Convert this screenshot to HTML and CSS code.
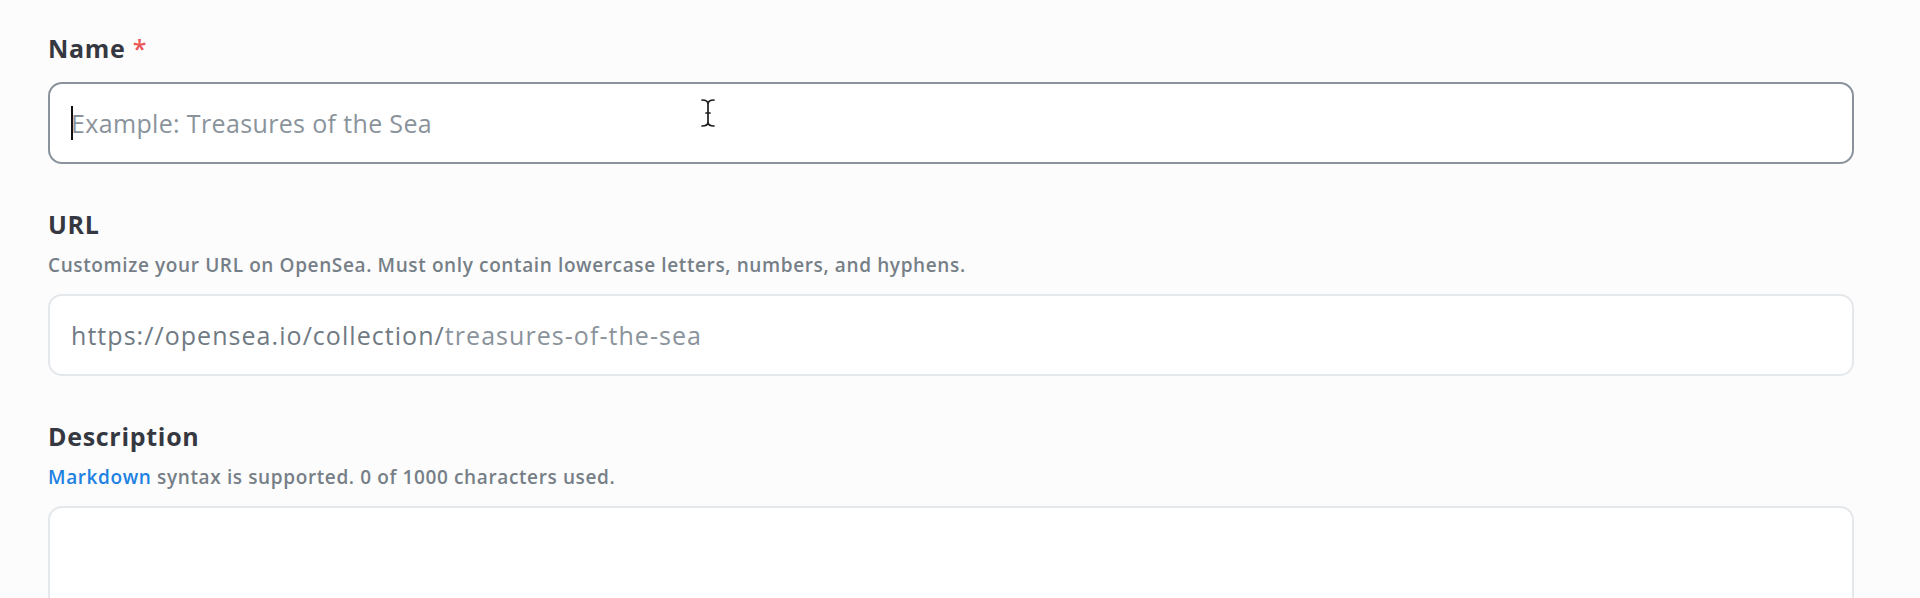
FILE: index.html
```html
<!DOCTYPE html>
<html lang="en">
<head>
<meta charset="utf-8">
<title>Create a collection</title>
<link rel="stylesheet" href="styles.css">
</head>
<body>
<form class="form">
  <div class="field">
    <label class="label" for="name">Name <span class="req">*</span></label>
    <div class="control control-focused">
      <span class="caret"></span>
      <input id="name" class="input" type="text" placeholder="Example: Treasures of the Sea">
      <svg class="ibeam" width="16" height="30" viewBox="0 0 16 30" aria-hidden="true">
        <g fill="none" stroke="#fff" stroke-width="3.2" stroke-linecap="round">
          <path d="M2 2 Q8 2 8 6 Q8 2 14 2 M8 6 V24 M2 28 Q8 28 8 24 Q8 28 14 28 M6 15 H10"/>
        </g>
        <g fill="none" stroke="#1e1e1e" stroke-width="1.7" stroke-linecap="round">
          <path d="M2 2 Q8 2 8 6 Q8 2 14 2 M8 6 V24 M2 28 Q8 28 8 24 Q8 28 14 28 M6 15 H10"/>
        </g>
      </svg>
    </div>
  </div>

  <div class="field">
    <label class="label" for="url">URL</label>
    <p class="helper">Customize your URL on OpenSea. Must only contain lowercase letters, numbers, and hyphens.</p>
    <div class="control">
      <span class="prefix">https://opensea.io/collection/</span>
      <input id="url" class="input input-url" type="text" placeholder="treasures-of-the-sea">
    </div>
  </div>

  <div class="field">
    <label class="label" for="desc">Description</label>
    <p class="helper"><a class="link" href="#">Markdown</a> syntax is supported. 0 of 1000 characters used.</p>
    <textarea id="desc" class="textarea"></textarea>
  </div>
</form>
</body>
</html>
```
FILE: styles.css
```css
html, body {
  margin: 0;
  padding: 0;
  background: #fcfcfc;
}

body {
  font-family: "Open Sans", "Noto Sans", sans-serif;
  color: #353840;
  overflow: hidden;
}

.form {
  display: flex;
  flex-direction: column;
  gap: 42px;
  padding: 30px 66px 0 48px;
}

.field {
  display: flex;
  flex-direction: column;
}

.label {
  font-size: 25px;
  line-height: 36px;
  font-weight: 700;
  letter-spacing: 0.7px;
  color: #353840;
  margin-bottom: 16px;
}

.label:has(+ .helper) {
  margin-bottom: 11px;
}

.req {
  color: #eb5757;
  font-weight: 600;
}

.helper {
  margin: 0 0 17px;
  font-size: 19px;
  line-height: 24px;
  font-weight: 600;
  letter-spacing: 0.62px;
  color: #767f87;
}

.link {
  color: #2081e2;
  text-decoration: none;
}

.control {
  position: relative;
  display: flex;
  align-items: center;
  box-sizing: border-box;
  height: 82px;
  padding: 0 21px;
  background: #fff;
  border: 2px solid #e5e8eb;
  border-radius: 14px;
  font-size: 25px;
  color: #707a83;
}

.control-focused {
  border-color: #8a939b;
}

.caret {
  flex: none;
  width: 2px;
  height: 34px;
  margin-right: -2px;
  background: #111;
}

.input {
  flex: 1;
  min-width: 0;
  height: 100%;
  padding: 0;
  border: 0;
  outline: none;
  background: transparent;
  font: inherit;
  font-weight: 400;
  letter-spacing: 0.35px;
  color: #353840;
}

.input::placeholder {
  color: #8a939b;
  opacity: 1;
}

.prefix {
  flex: none;
  letter-spacing: 1.05px;
  color: #707a83;
}

.input-url {
  letter-spacing: 1.05px;
}

.ibeam {
  position: absolute;
  left: 650px;
  top: 14px;
}

.textarea {
  display: block;
  box-sizing: border-box;
  width: 100%;
  height: 160px;
  padding: 20px 21px;
  background: #fff;
  border: 2px solid #e5e8eb;
  border-radius: 14px;
  resize: none;
  font: 400 25px "Open Sans", sans-serif;
  color: #353840;
  outline: none;
}
```
